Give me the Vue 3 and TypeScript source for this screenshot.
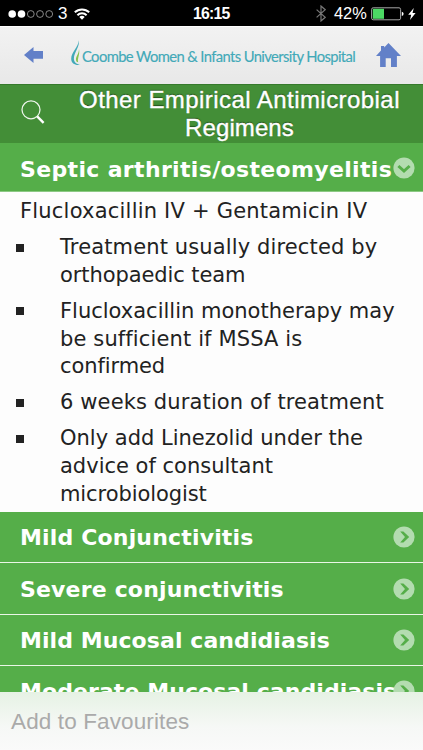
<script setup lang="ts">
interface Topic {
  title: string
  cls: string
}

interface Line {
  text: string
  cls: string
}

const treatment: Line[][] = [
  [
    { text: 'Treatment usually directed by', cls: 'wide' },
    { text: 'orthopaedic team', cls: 'tight' },
  ],
  [
    { text: 'Flucloxacillin monotherapy may', cls: '' },
    { text: 'be sufficient if MSSA is', cls: 'wide' },
    { text: 'confirmed', cls: 'tight' },
  ],
  [{ text: '6 weeks duration of treatment', cls: 'wide' }],
  [
    { text: 'Only add Linezolid under the', cls: '' },
    { text: 'advice of consultant', cls: '' },
    { text: 'microbiologist', cls: 'tight' },
  ],
]

const topics: Topic[] = [
  { title: 'Mild Conjunctivitis', cls: 't1' },
  { title: 'Severe conjunctivitis', cls: 't2' },
  { title: 'Mild Mucosal candidiasis', cls: 't3' },
  { title: 'Moderate Mucosal candidiasis', cls: 't4' },
]
</script>

<template>
  <div class="screen">
    <div class="status">
      <svg class="dots" viewBox="0 0 46 10">
        <circle cx="4.2" cy="5" r="3.8" fill="#fff" />
        <circle cx="13.5" cy="5" r="3.8" fill="#fff" />
        <g fill="none" stroke="#aaa" stroke-width="0.8">
          <circle cx="22.8" cy="5" r="3.4" />
          <circle cx="32" cy="5" r="3.4" />
          <circle cx="41.2" cy="5" r="3.4" />
        </g>
      </svg>
      <span class="carrier">3</span>
      <svg class="wifi" viewBox="0 0 16 12">
        <g fill="none" stroke="#fff" stroke-width="2">
          <path d="M0.8 4.3A10.4 10.4 0 0 1 15.2 4.3" />
          <path d="M3.4 7.2A6.6 6.6 0 0 1 12.6 7.2" />
        </g>
        <path d="M8 11.8L5.3 9.1A3.8 3.8 0 0 1 10.7 9.1Z" fill="#fff" />
      </svg>
      <span class="time">16:15</span>
      <svg class="bt" viewBox="0 0 10 17">
        <path d="M0.6 4.6L9.2 12.3L5 16V1L9.2 4.7L0.6 12.4" fill="none" stroke="#777" stroke-width="1.2" />
      </svg>
      <span class="percent">42%</span>
      <svg class="battery" viewBox="0 0 33 14">
        <rect x="0.6" y="0.8" width="29" height="12" rx="1.6" fill="none" stroke="#a5a5a5" stroke-width="1" />
        <rect x="1.8" y="1.8" width="11.2" height="10" fill="#4cd964" />
        <path d="M30.8 4.7Q32.6 5 32.6 6.8Q32.6 8.6 30.8 8.9Z" fill="#fff" />
      </svg>
      <svg class="bolt" viewBox="0 0 8 12"><path d="M5.8 0L0.2 6.7H3.2L2 12L7.6 4.9H4.5Z" fill="#fff" /></svg>
    </div>

    <header class="nav">
      <svg class="back" viewBox="0 0 19 16">
        <path d="M0 8L9.5 0V4.1H19V11.8H9.5V16Z" fill="#6280c8" />
      </svg>
      <div class="brand">
        <svg viewBox="0 0 12 26">
          <path d="M7.7 0.3C7.7 7 0.2 12.4 0.2 18.7C0.2 23.4 4 25.6 9.4 24.8C5.2 24 2.7 22 2.9 18.2C3.1 12.3 9.2 6.5 7.7 0.3Z" fill="#42a9b8" />
          <path d="M8 9C8 13.6 4.5 16.8 5 20C5.2 21.5 6 22.2 7.2 22.3C6 18.6 9.2 14.5 8 9Z" fill="#86c34c" />
        </svg>
        <span>Coombe Women &amp; Infants University Hospital</span>
      </div>
      <svg class="home" viewBox="0 0 25 24">
        <path d="M12.5 0L25 13H20.9V24H15V15.2H9.7V24H4.1V13H0L5 7.6V3H8.2V4.4Z" fill="#6280c8" />
      </svg>
    </header>

    <div class="heading">
      <svg class="search" viewBox="0 0 24 25">
        <circle cx="10" cy="9.8" r="9" fill="none" stroke="#eef6ec" stroke-width="1.25" />
        <path d="M16.2 16.4L22.6 22.8" fill="none" stroke="#fff" stroke-width="2.4" />
      </svg>
      <h1><span class="h-a">Other Empirical Antimicrobial</span><br /><span class="h-b">Regimens</span></h1>
    </div>

    <main class="list">
      <section class="row open">
        <span class="t0">Septic arthritis/osteomyelitis</span>
        <svg class="disc" viewBox="0 0 22 22">
          <circle cx="11" cy="11" r="10.6" fill="#b9dfb6" />
          <path d="M5.4 9L11 14L16.6 9" fill="none" stroke="#55ae49" stroke-width="3" />
        </svg>
      </section>

      <article class="detail">
        <p class="drug">Flucloxacillin IV + Gentamicin IV</p>
        <ul>
          <li v-for="(lines, i) in treatment" :key="i">
            <i class="bullet"></i>
            <div>
              <span v-for="line in lines" :key="line.text" class="line" :class="line.cls">{{ line.text }}</span>
            </div>
          </li>
        </ul>
      </article>

      <section v-for="topic in topics" :key="topic.title" class="row">
        <span :class="topic.cls">{{ topic.title }}</span>
        <svg class="disc" viewBox="0 0 22 22">
          <circle cx="11" cy="11" r="10.6" fill="#b9dfb6" />
          <path d="M7.2 5.6H10.4L16.2 11L10.4 16.4H7.2L12 11Z" fill="#55ae49" />
        </svg>
      </section>
    </main>

    <footer class="favourites">Add to Favourites</footer>
  </div>
</template>

<style>
body {
  margin: 0;
  overflow: hidden;
}
</style>

<style scoped>
.screen {
  width: 423px;
  height: 750px;
  display: flex;
  flex-direction: column;
  overflow: hidden;
  background: #fdfdfd;
  font-family: "Liberation Sans", Arial, sans-serif;
}
svg {
  display: block;
  flex: none;
}
.status {
  flex: none;
  height: 26px;
  display: flex;
  align-items: center;
  padding: 1px 6px 0 8px;
  box-sizing: border-box;
  background: #000;
  color: #fff;
  font-size: 16.5px;
  white-space: nowrap;
}
.dots {
  width: 46px;
  height: 10px;
}
.carrier {
  margin-left: 4px;
  width: 12px;
  font-size: 17px;
}
.wifi {
  width: 16px;
  height: 12px;
  margin-left: 4px;
}
.time {
  margin-left: 103px;
  width: 37px;
  font-weight: bold;
  font-size: 15.8px;
  letter-spacing: -0.8px;
}
.bt {
  width: 10px;
  height: 17px;
  margin-left: 86px;
}
.percent {
  width: 34px;
  margin-left: 8px;
  font-size: 16.4px;
}
.battery {
  width: 33px;
  height: 14px;
  margin-left: 3px;
}
.bolt {
  width: 8px;
  height: 12px;
  margin-left: 4px;
}
.nav {
  flex: none;
  height: 58px;
  display: flex;
  align-items: center;
  box-sizing: border-box;
  padding: 0 22px 2px 24px;
  background: linear-gradient(#f2f2f2, #e8e8e8);
  border-top: 1px solid #fff;
}
.back {
  width: 19px;
  height: 16px;
}
.brand {
  display: flex;
  align-items: center;
  margin-left: 28px;
  width: 300px;
  color: #42a9b8;
  font-family: Lato, "Liberation Sans", sans-serif;
  font-size: 14.8px;
  letter-spacing: -0.62px;
  -webkit-text-stroke: 0.15px #42a9b8;
  white-space: nowrap;
}
.brand svg {
  width: 12px;
  height: 26px;
  margin: -4px 0 0;
}
.brand span {
  margin: 2px 0 0 -1px;
}
.home {
  width: 25px;
  height: 24px;
  margin-left: 5px;
}
.heading {
  flex: none;
  height: 59px;
  box-sizing: border-box;
  display: flex;
  padding-left: 21px;
  background: #438e37;
  border-top: 1px solid #35792b;
}
.search {
  width: 24px;
  height: 25px;
  margin-top: 15px;
}
h1 {
  flex: 1;
  margin: 1px 0 0 11px;
  color: #fff;
  font-size: 24px;
  font-weight: normal;
  line-height: 28px;
  text-align: center;
  white-space: nowrap;
  -webkit-text-stroke: 0.4px #fff;
  text-shadow: 0 -1px 1px #1f4d18;
}
.h-a {
  letter-spacing: 0.44px;
}
.h-b {
  letter-spacing: 0.1px;
}
.list {
  flex: 1;
  min-height: 0;
  overflow: hidden;
}
.row {
  height: 51.4px;
  box-sizing: border-box;
  display: flex;
  align-items: center;
  justify-content: space-between;
  padding: 1px 8px 0 20px;
  background: #55ae49;
  border-bottom: 1.4px solid #e9f6e6;
  color: #fff;
  font: bold 22px "DejaVu Sans", Verdana, sans-serif;
  white-space: nowrap;
}
.row.open {
  height: 49px;
  padding-top: 4px;
  border-bottom: 1px solid #8cc984;
}
.row.open .disc {
  margin-top: -3px;
}
.row > span {
  width: 0;
}
.t0 {
  letter-spacing: 0.34px;
}
.t1,
.t2 {
  letter-spacing: 0.17px;
}
.t3,
.t4 {
  letter-spacing: 0.08px;
}
.disc {
  width: 22px;
  height: 22px;
  margin-top: -1px;
  opacity: 0.95;
}
.detail {
  height: 320px;
  box-sizing: border-box;
  padding: 6px 0 0 20px;
  background: #fdfdfd;
  color: #222;
  font: 21px/27.7px "DejaVu Sans", Verdana, sans-serif;
  white-space: nowrap;
}
.drug {
  margin: 0;
  letter-spacing: 0.21px;
}
ul {
  list-style: none;
  margin: 8.5px 0 0 -4px;
  padding: 0;
  display: flex;
  flex-direction: column;
  gap: 8.3px;
}
li {
  display: flex;
}
.bullet {
  flex: none;
  width: 8px;
  height: 8px;
  margin: 9.5px 36px 0 0;
  background: #222;
}
.line {
  display: block;
}
.line.wide {
  letter-spacing: 0.13px;
}
.line.tight {
  letter-spacing: -0.09px;
}
.favourites {
  flex: none;
  height: 58px;
  box-sizing: border-box;
  padding: 0 0 0 11px;
  background: linear-gradient(#e6f2e4, #f6f8f6 60%, #fafafa);
  color: #aaa;
  font-size: 22.5px;
  letter-spacing: 0.12px;
  line-height: 59px;
}
</style>
